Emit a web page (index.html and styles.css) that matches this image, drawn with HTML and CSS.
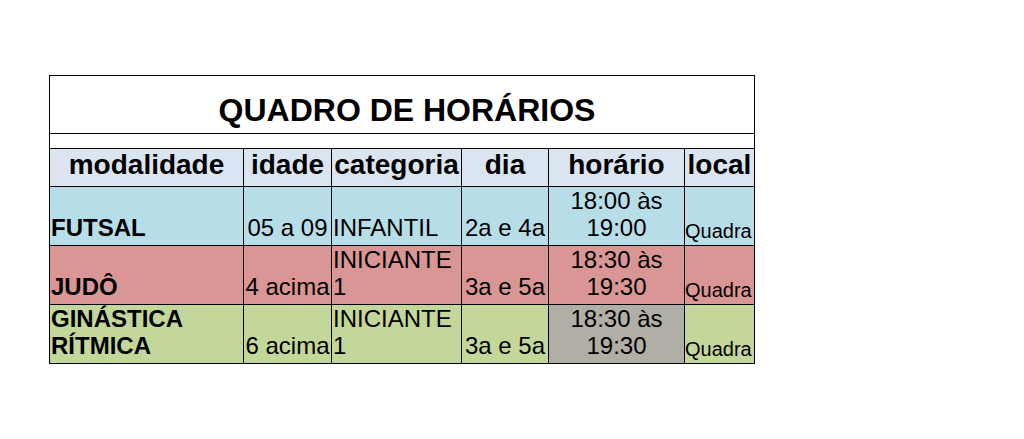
FILE: index.html
```html
<!DOCTYPE html>
<html lang="pt">
<head>
<meta charset="utf-8">
<title>Quadro de Horários</title>
<link rel="stylesheet" href="styles.css">
</head>
<body>
<div class="page">
  <table class="schedule">
    <colgroup>
      <col class="c-mod"><col class="c-idade"><col class="c-cat"><col class="c-dia"><col class="c-hor"><col class="c-local">
    </colgroup>
    <tbody>
      <tr class="row-title"><td colspan="6" class="title">QUADRO DE HORÁRIOS</td></tr>
      <tr class="row-empty"><td colspan="6"></td></tr>
      <tr class="row-head">
        <th>modalidade</th><th>idade</th><th>categoria</th><th>dia</th><th>horário</th><th>local</th>
      </tr>
      <tr class="row-data futsal">
        <td class="mod">FUTSAL</td>
        <td class="center">05 a 09</td>
        <td>INFANTIL</td>
        <td class="center">2a e 4a</td>
        <td class="center">18:00 às 19:00</td>
        <td class="local">Quadra</td>
      </tr>
      <tr class="row-data judo">
        <td class="mod">JUDÔ</td>
        <td class="center">4 acima</td>
        <td>INICIANTE 1</td>
        <td class="center">3a e 5a</td>
        <td class="center">18:30 às 19:30</td>
        <td class="local">Quadra</td>
      </tr>
      <tr class="row-data ginastica">
        <td class="mod">GINÁSTICA RÍTMICA</td>
        <td class="center">6 acima</td>
        <td>INICIANTE 1</td>
        <td class="center">3a e 5a</td>
        <td class="center gray">18:30 às 19:30</td>
        <td class="local">Quadra</td>
      </tr>
    </tbody>
  </table>
</div>
</body>
</html>
```

FILE: styles.css
```css
html, body {
  margin: 0;
  padding: 0;
  background: #ffffff;
}

body {
  font-family: "Liberation Sans", Arial, Helvetica, sans-serif;
  color: #000000;
}

.page {
  padding: 75px 0 0 49px;
}

.schedule {
  border-collapse: collapse;
  table-layout: fixed;
  width: 705px;
}

.c-mod { width: 194px; }
.c-idade { width: 88px; }
.c-cat { width: 130px; }
.c-dia { width: 87px; }
.c-hor { width: 136px; }
.c-local { width: 70px; }

.schedule td,
.schedule th {
  border: 1px solid #000000;
  padding: 0 1px;
  overflow: visible;
  white-space: normal;
}

.row-title { height: 58px; }
.row-empty { height: 15px; }
.row-head { height: 38px; }
.row-data { height: 59px; }

.schedule .title {
  font-size: 32px;
  font-weight: bold;
  line-height: 36px;
  text-align: center;
  vertical-align: bottom;
  padding: 0 1px 5px 11px;
}

.schedule .row-empty td {
  padding: 0;
}

.row-head th {
  background: #dbe5f1;
  font-size: 28px;
  font-weight: bold;
  line-height: 32px;
  text-align: center;
  vertical-align: bottom;
  padding: 0 0 5px 0;
  white-space: nowrap;
}

.schedule .row-data td {
  font-size: 24px;
  line-height: 27px;
  vertical-align: bottom;
  padding: 0 1px 4px 1px;
  text-align: left;
}

.schedule .row-data .mod {
  font-weight: bold;
}

.schedule .row-data .center {
  text-align: center;
}

.schedule .row-data .local {
  font-size: 20px;
  line-height: 20px;
  padding-left: 0;
  padding-right: 0;
}

.futsal td { background: #b7dee8; }
.judo td { background: #da9694; }
.ginastica td { background: #c4d79b; }
.ginastica td.gray { background: #b1aea5; }
```
